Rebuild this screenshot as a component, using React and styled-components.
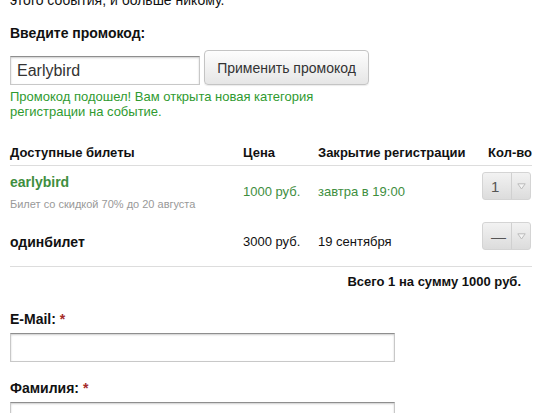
import styled, { createGlobalStyle } from "styled-components";

const GlobalStyle = createGlobalStyle`
    body{
        margin: 0;
        background: #fff;
        font-family: "Liberation Sans", Arial, sans-serif;
        color: #111;
        overflow: hidden;
    }
`

const tickets = [
    {name: "earlybird", desc: "Билет со скидкой 70% до 20 августа", price: "1000 руб.", close: "завтра в 19:00", qty: "1", active: true},
    {name: "одинбилет", desc: null, price: "3000 руб.", close: "19 сентября", qty: "—", active: false},
];

const App = () => {
    return(
        <Page>
            <GlobalStyle/>
            <Intro>этого события, и больше никому.</Intro>

            <Label>Введите промокод:</Label>
            <PromoRow>
                <PromoInput defaultValue="Earlybird"/>
                <Button>Применить промокод</Button>
            </PromoRow>
            <Success>Промокод подошел! Вам открыта новая категория<br/>регистрации на событие.</Success>

            <Tickets>
                <HeadCell>Доступные билеты</HeadCell>
                <HeadCell>Цена</HeadCell>
                <HeadCell>Закрытие регистрации</HeadCell>
                <HeadCell $right>Кол-во</HeadCell>
                {tickets.map(t => (
                    <Row key={t.name}>
                        <NameCell>
                            <TicketName $active={t.active}>{t.name}</TicketName>
                            {t.desc ? <TicketDesc>{t.desc}</TicketDesc> : null}
                        </NameCell>
                        <Cell $active={t.active}>{t.price}</Cell>
                        <Cell $active={t.active}>{t.close}</Cell>
                        <Cell $right>
                            <Select>
                                <span className="value">{t.qty}</span>
                                <span className="arrow">
                                    <svg width="9" height="7" viewBox="0 0 9 7">
                                        <path d="M0.8 0.8 L4.5 6 L8.2 0.8 Z" fill="#f4f4f4" stroke="#bbb" strokeWidth="1"/>
                                    </svg>
                                </span>
                            </Select>
                        </Cell>
                    </Row>
                ))}
            </Tickets>
            <Total>Всего 1 на сумму 1000 руб.</Total>

            <Field $first>
                <FieldLabel>E-Mail: <Req>*</Req></FieldLabel>
                <TextInput/>
            </Field>
            <Field>
                <FieldLabel>Фамилия: <Req>*</Req></FieldLabel>
                <TextInput/>
            </Field>
        </Page>
    )
}

const Page = styled.div`
    width: 522px;
    padding: 0 0 0 10px;
    margin-top: -9px;
`

const Intro = styled.p`
    margin: 0;
    font-size: 14px;
    line-height: 18px;
`

const Label = styled.h4`
    margin: 15px 0 0;
    font-size: 14px;
    line-height: 18px;
    font-weight: bold;
`

const PromoRow = styled.div`
    display: flex;
    align-items: flex-start;
    gap: 4px;
    margin-top: 8px;
`

const TextInput = styled.input`
    box-sizing: border-box;
    width: 385px;
    height: 29px;
    margin: 0;
    padding: 0 6px;
    border: 1px solid #c8c8c8;
    border-top-color: #8e8e8e;
    box-shadow: inset 0 1px 2px rgba(0,0,0,0.2);
    font-family: "Liberation Sans", Arial, sans-serif;
    font-size: 16px;
    color: #333;
    outline: none;
`

const PromoInput = styled(TextInput)`
    width: 190px;
    margin-top: 6px;
`

const Button = styled.button`
    box-sizing: border-box;
    height: 35px;
    width: 165px;
    border: 1px solid #c4c4c4;
    border-radius: 4px;
    background: linear-gradient(#fdfdfd, #e6e6e6);
    box-shadow: 0 1px 1px rgba(0,0,0,0.08);
    font-family: "Liberation Sans", Arial, sans-serif;
    font-size: 14px;
    color: #333;
    padding: 0;
`

const Success = styled.p`
    margin: 4px 0 0;
    font-size: 13px;
    line-height: 15px;
    color: #2f9a2f;
`

const Tickets = styled.div`
    display: grid;
    grid-template-columns: 233px 75px 164px 50px;
    grid-auto-rows: auto;
    margin-top: 26px;
    border-bottom: 1px solid #ddd;
`

const HeadCell = styled.div`
    font-size: 13px;
    font-weight: bold;
    line-height: 16px;
    padding-bottom: 4px;
    border-bottom: 1px solid #ddd;
    text-align: ${p => p.$right ? "right" : "left"};
    white-space: nowrap;
`

const Row = styled.div`
    display: contents;
    & > div{
        height: 50px;
    }
`

const NameCell = styled.div`
    display: flex;
    flex-direction: column;
    justify-content: center;
    padding-top: 2px;
    box-sizing: border-box;
`

const TicketName = styled.div`
    font-size: 14px;
    font-weight: bold;
    line-height: 18px;
    color: ${p => p.$active ? "#3e8e3e" : "#111"};
`

const TicketDesc = styled.div`
    font-size: 11px;
    line-height: 14px;
    margin-top: 6px;
    color: #999;
`

const Cell = styled.div`
    display: flex;
    align-items: center;
    justify-content: ${p => p.$right ? "flex-end" : "flex-start"};
    font-size: 13px;
    color: ${p => p.$active ? "#3e8e3e" : "#111"};
`

const Select = styled.div`
    box-sizing: border-box;
    display: flex;
    width: 49px;
    height: 28px;
    margin: 0 1px 10px 0;
    border: 1px solid #d4d4d4;
    border-radius: 3px;
    background: linear-gradient(#f2f2f2, #dcdcdc);
    font-size: 15px;
    color: #555;
    .value{
        flex: 1;
        display: flex;
        align-items: center;
        padding-left: 8px;
    }
    .arrow{
        width: 18px;
        display: flex;
        align-items: center;
        justify-content: center;
        border-left: 1px solid #d0d0d0;
    }
`

const Total = styled.div`
    text-align: right;
    padding-right: 11px;
    margin-top: 7px;
    font-size: 13px;
    font-weight: bold;
    line-height: 16px;
`

const Field = styled.div`
    display: flex;
    flex-direction: column;
    margin-top: ${p => p.$first ? "20px" : "17px"};
`

const FieldLabel = styled.label`
    font-size: 14px;
    font-weight: bold;
    line-height: 18px;
    margin-bottom: 5px;
`

const Req = styled.span`
    color: #a52a2a;
`

export default App;
